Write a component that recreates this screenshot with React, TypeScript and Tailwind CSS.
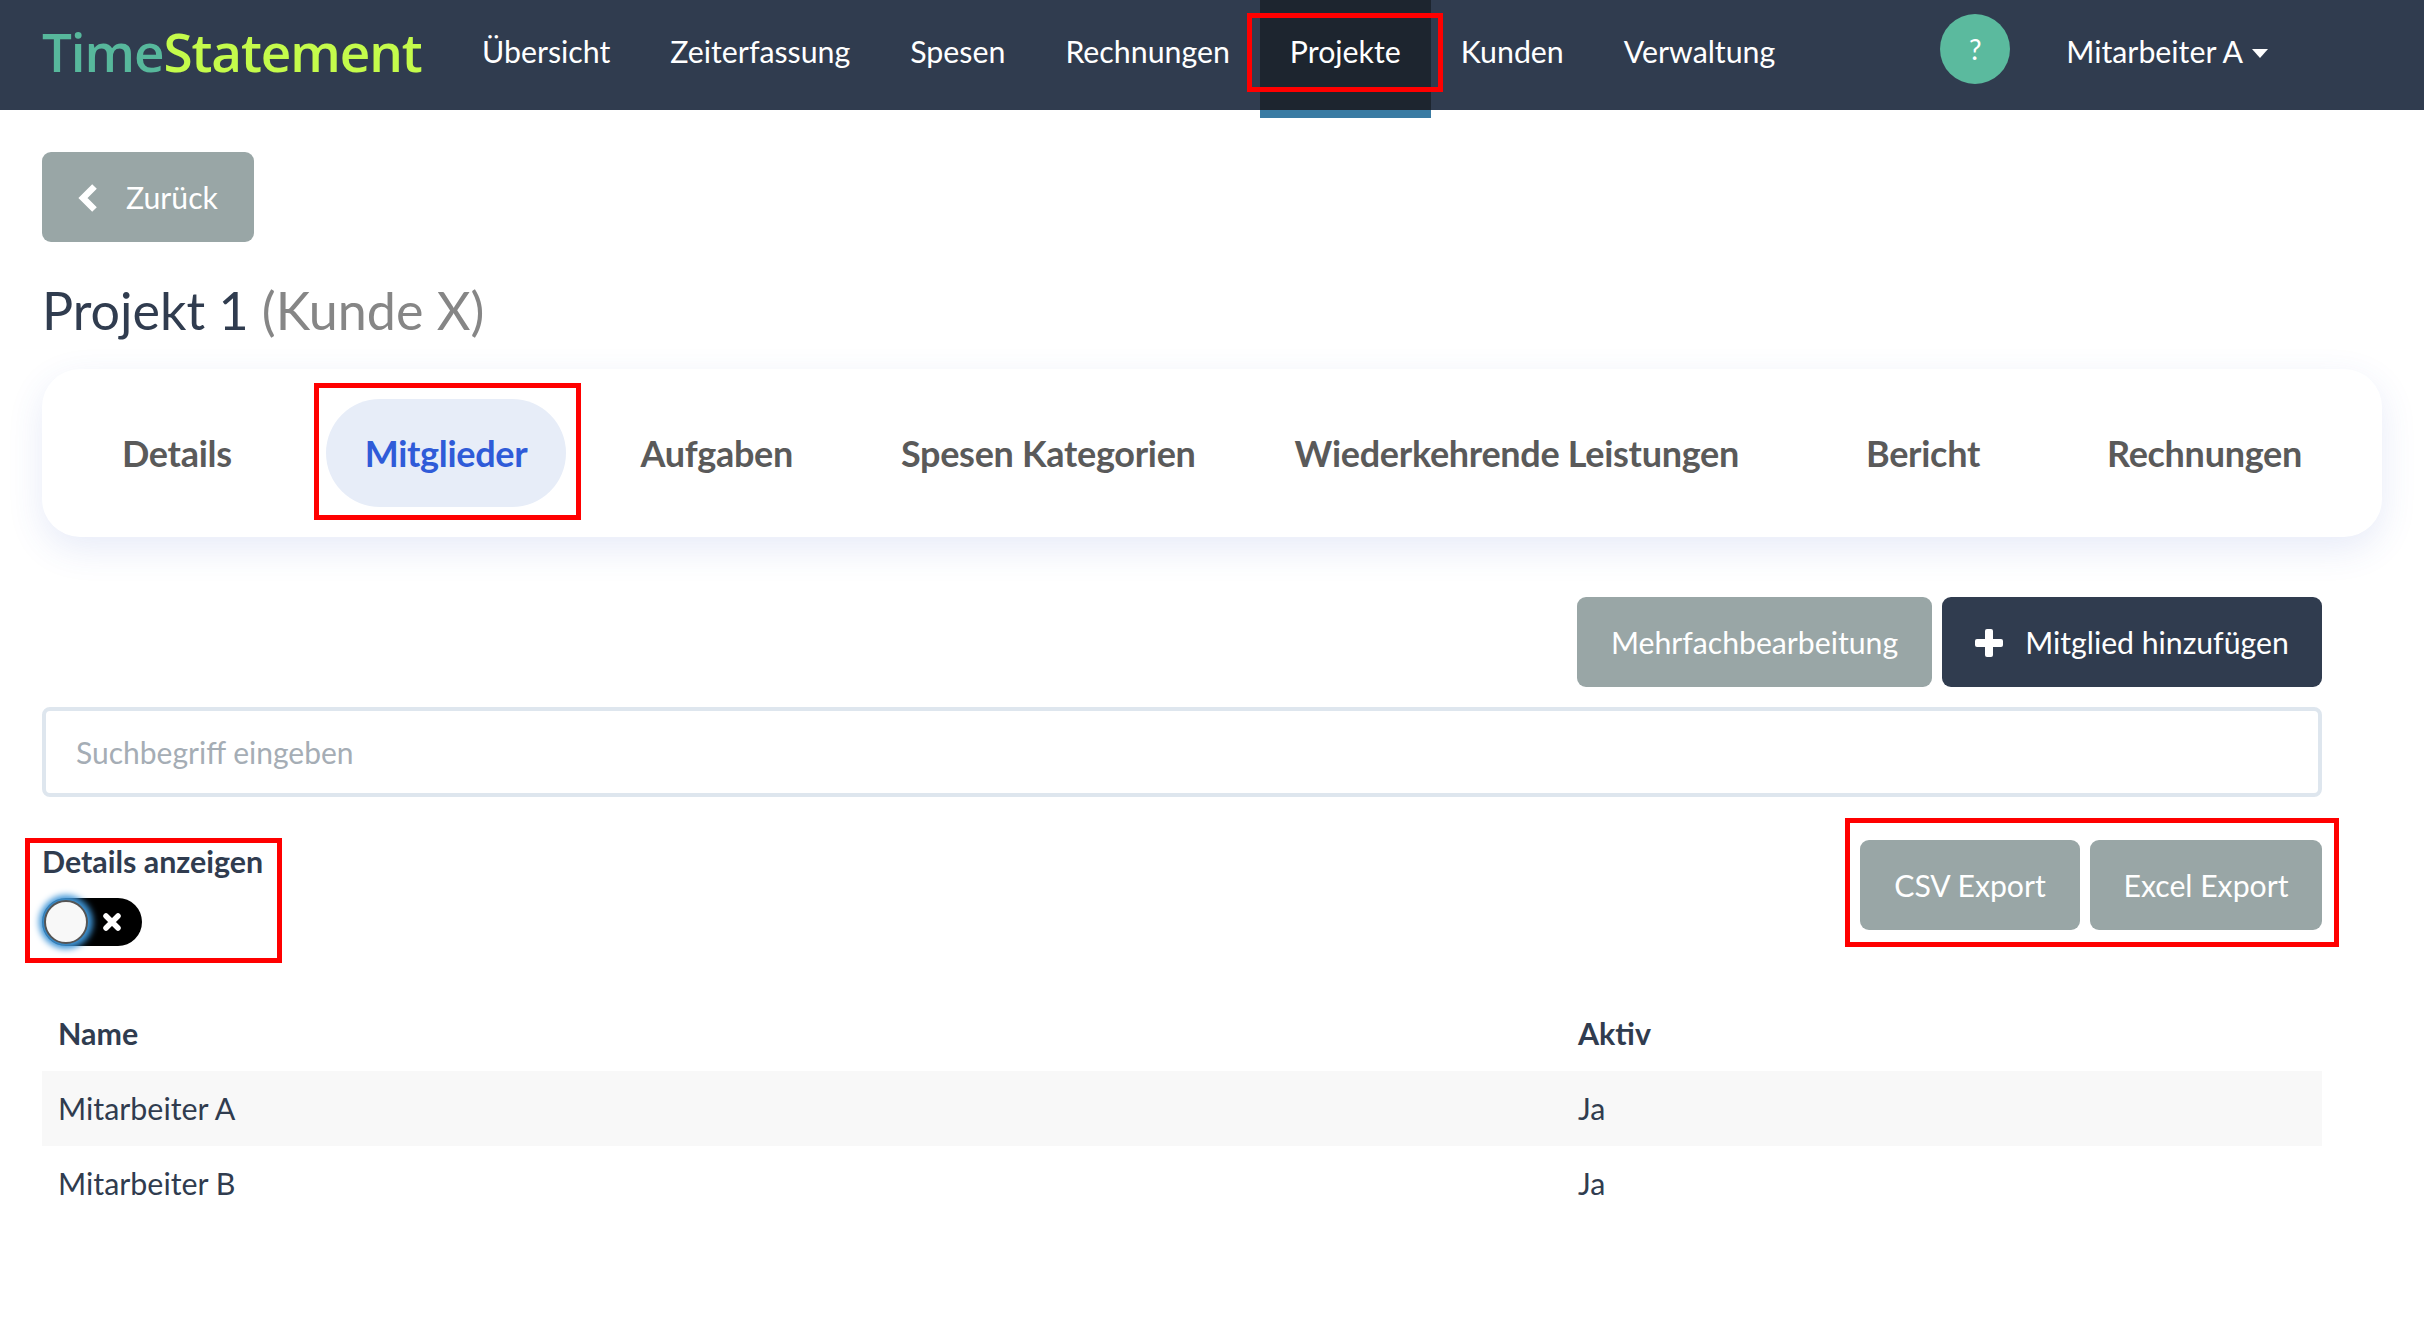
import { Fragment } from 'react'

const navItems = ['Übersicht', 'Zeiterfassung', 'Spesen', 'Rechnungen', 'Projekte', 'Kunden', 'Verwaltung']

const tabs = [
  { label: 'Details', gap: 'ml-0 px-[38px]' },
  { label: 'Mitglieder', gap: 'ml-[56px] px-[39px]', active: true },
  { label: 'Aufgaben', gap: 'ml-[36px] px-[38px]' },
  { label: 'Spesen Kategorien', gap: 'ml-[32px] px-[38px]' },
  { label: 'Wiederkehrende Leistungen', gap: 'ml-[23px] px-[38px]' },
  { label: 'Bericht', gap: 'ml-[51px] px-[38px]' },
  { label: 'Rechnungen', gap: 'ml-[51px] px-[38px]' }
]

function RedBox({ className }: { className: string }): JSX.Element {
  return <div className={`pointer-events-none absolute border-[5px] border-[#ff0000] ${className}`} />
}

function NavBar(): JSX.Element {
  return (
    <nav className="flex h-[110px] items-stretch bg-[#303c4f] pl-[42px] text-[30.3px] text-white">
      <div className="flex w-[410px] items-center pb-[7px] font-['Open_Sans',sans-serif] text-[53px] font-semibold tracking-[-1.1px] leading-none">
        <span className="text-[#57b89c]">Time</span>
        <span className="text-[#c4fb4b]">Statement</span>
      </div>
      {navItems.map((item) => {
        const active = item === 'Projekte'
        return (
          <a key={item} className={`relative flex items-center px-[30px] pb-[7px] ${active ? 'bg-[#1d252f]' : ''}`}>
            {item}
            {active && (
              <Fragment>
                <span className="absolute inset-x-0 top-full h-[8px] bg-[#3a7ba3]" />
                <RedBox className="top-[13px] right-[-12px] bottom-[18px] left-[-13px]" />
              </Fragment>
            )}
          </a>
        )
      })}
      <div className="ml-[135px] flex items-center pb-[12px]">
        <span className="flex h-[70px] w-[70px] items-center justify-center rounded-full bg-[#5bba9e] text-[28px]">?</span>
      </div>
      <div className="ml-[56px] flex items-center gap-[9px] pb-[7px]">
        Mitarbeiter A
        <span className="mt-[4px] h-0 w-0 border-x-[8px] border-t-[9px] border-x-transparent border-t-white" />
      </div>
    </nav>
  )
}

function Button({ children, dark, className }: { children: React.ReactNode; dark?: boolean; className: string }): JSX.Element {
  return (
    <button
      type="button"
      className={`flex h-[90px] items-center justify-center rounded-[9px] pt-[2px] text-[30.2px] text-white ${dark ? 'bg-[#303c4f]' : 'bg-[#99a6a6]'} ${className}`}
    >
      {children}
    </button>
  )
}

export default function App(): JSX.Element {
  return (
    <div className="min-h-[1330px] bg-white font-['Lato',sans-serif] text-[#303c4f]">
      <NavBar />
      <main className="pt-[42px] pr-[102px] pl-[42px]">
        <Button className="w-[212px] gap-[28px]">
          <svg viewBox="0 0 20 28" className="h-[28px] w-[20px]" aria-hidden>
            <path d="M16.5 2.5 L5 14 L16.5 25.5" fill="none" stroke="white" strokeWidth="6.5" strokeLinejoin="miter" />
          </svg>
          Zurück
        </Button>

        <h1 className="mt-[37px] text-[52px] leading-[62px]">
          Projekt 1 <span className="text-[#868686]">(Kunde X)</span>
        </h1>

        <div className="mt-[28px] mr-[-60px] flex h-[168px] items-center rounded-[38px] bg-white pl-[42px] text-[36px] font-bold tracking-[-0.3px] text-[#5a5a5a] shadow-[0_12px_36px_rgba(60,90,200,0.12)]">
          {tabs.map((tab) => (
            <a
              key={tab.label}
              className={`relative flex h-[108px] items-center rounded-[54px] ${tab.gap} ${tab.active ? 'bg-[#e7edf8] text-[#2f5bd8]' : ''}`}
            >
              {tab.label}
              {tab.active && <RedBox className="top-[-16px] right-[-15px] bottom-[-13px] left-[-12px]" />}
            </a>
          ))}
        </div>

        <div className="mt-[60px] flex justify-end gap-[10px]">
          <Button className="w-[355px]">Mehrfachbearbeitung</Button>
          <Button dark className="w-[380px] gap-[22px]">
            <svg viewBox="0 0 28 28" className="h-[28px] w-[28px]" aria-hidden>
              <rect x="10" y="0" width="8" height="28" rx="2" fill="white" />
              <rect x="0" y="10" width="28" height="8" rx="2" fill="white" />
            </svg>
            Mitglied hinzufügen
          </Button>
        </div>

        <input
          placeholder="Suchbegriff eingeben"
          className="mt-[20px] block h-[90px] w-full rounded-[8px] border-[4px] border-[#dee6ee] px-[30px] text-[30px] outline-none placeholder:text-[#a5adb5]"
        />

        <div className="mt-[43px] flex items-start justify-between">
          <div className="relative">
            <div className="pt-[3px] text-[30.4px] leading-[36px] font-bold">Details anzeigen</div>
            <div className="relative mt-[19px] flex h-[48px] w-[100px] items-center justify-end rounded-full bg-black pr-[20px]">
              <span className="absolute top-[2px] left-[2px] h-[44px] w-[44px] rounded-full border-2 border-[#555555] bg-[#f8f8f8] shadow-[0_0_6px_5px_#3f96d8]" />
              <svg viewBox="0 0 20 20" className="h-[20px] w-[20px]" aria-hidden>
                <path d="M4 4 L16 16 M16 4 L4 16" stroke="white" strokeWidth="5.5" strokeLinecap="round" />
              </svg>
            </div>
            <RedBox className="top-[-2px] right-[-19px] bottom-[-17px] left-[-17px]" />
          </div>
          <div className="relative flex gap-[10px]">
            <Button className="w-[220px]">CSV Export</Button>
            <Button className="w-[232px]">Excel Export</Button>
            <RedBox className="top-[-22px] right-[-17px] bottom-[-17px] left-[-15px]" />
          </div>
        </div>

        <table className="mt-[50px] w-full table-fixed border-collapse text-left text-[30.4px]">
          <thead>
            <tr className="h-[75px]">
              <th className="w-[1519px] pl-[16px] font-bold">Name</th>
              <th className="pl-[17px] font-bold">Aktiv</th>
            </tr>
          </thead>
          <tbody>
            <tr className="h-[75px] bg-[#f8f8f8]">
              <td className="pl-[16px]">Mitarbeiter A</td>
              <td className="pl-[17px]">Ja</td>
            </tr>
            <tr className="h-[75px]">
              <td className="pl-[16px]">Mitarbeiter B</td>
              <td className="pl-[17px]">Ja</td>
            </tr>
          </tbody>
        </table>
      </main>
    </div>
  )
}
